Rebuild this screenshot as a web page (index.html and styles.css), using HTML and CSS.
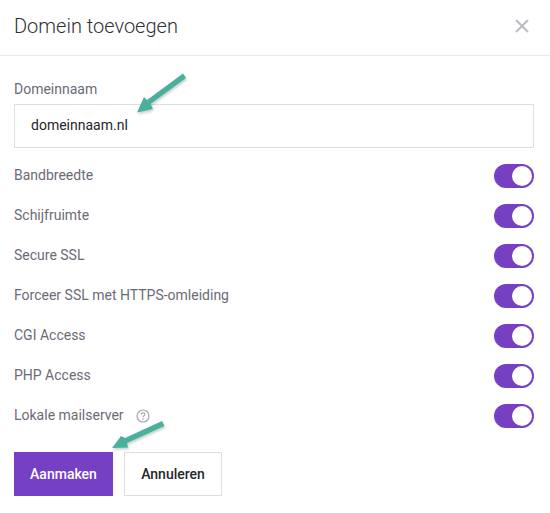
FILE: index.html
```html
<!DOCTYPE html>
<html lang="nl">
<head>
<meta charset="utf-8">
<title>Domein toevoegen</title>
<link rel="stylesheet" href="styles.css">
</head>
<body>
<div class="dialog">
  <header class="head">
    <h1 class="title">Domein toevoegen</h1>
    <svg class="close" width="14" height="14" viewBox="0 0 14 14"><path d="M1 1L13 13M13 1L1 13" stroke="#b9bcc6" stroke-width="2" fill="none"/></svg>
  </header>
  <main class="body">
    <label class="label">Domeinnaam</label>
    <div class="input">domeinnaam.nl</div>
    <div class="rows">
      <div class="row"><span class="row-label">Bandbreedte</span><span class="toggle"></span></div>
      <div class="row"><span class="row-label">Schijfruimte</span><span class="toggle"></span></div>
      <div class="row"><span class="row-label">Secure SSL</span><span class="toggle"></span></div>
      <div class="row"><span class="row-label">Forceer SSL met HTTPS-omleiding</span><span class="toggle"></span></div>
      <div class="row"><span class="row-label">CGI Access</span><span class="toggle"></span></div>
      <div class="row"><span class="row-label">PHP Access</span><span class="toggle"></span></div>
      <div class="row"><span class="row-label">Lokale mailserver
        <svg class="help" width="14" height="14" viewBox="0 0 14 14"><circle cx="7" cy="7" r="6" fill="none" stroke="#a3a6b1" stroke-width="1.2"/><path d="M5.1 5.5C5.2 4.4 6 3.8 7 3.8C8.1 3.8 8.9 4.5 8.9 5.4C8.9 6.6 7 6.7 7 8.2" fill="none" stroke="#a3a6b1" stroke-width="1.2"/><circle cx="7" cy="10.1" r=".8" fill="#a3a6b1"/></svg></span><span class="toggle"></span></div>
    </div>
    <div class="actions">
      <button class="btn primary">Aanmaken</button>
      <button class="btn ghost">Annuleren</button>
    </div>
  </main>
  <svg class="arrow arrow-top" width="60" height="50" viewBox="0 0 60 50"><path d="M0 39.500L7 24L10 27L46 .5L49 5L13.500 31L16 36Z" fill="#48b09b"/></svg>
  <svg class="arrow arrow-bottom" width="60" height="36" viewBox="0 0 60 36"><path d="M0 28L9 16L13 18L50 1L52.500 6L15 23L16 27.500Z" fill="#48b09b"/></svg>
</div>
</body>
</html>
```
FILE: styles.css
```css
* { box-sizing: border-box; }
html, body { margin: 0; background: #fff; }
body { font-family: Roboto, "Liberation Sans", sans-serif; }
.dialog { position: relative; width: 550px; height: 513px; overflow: hidden; }
.head {
  height: 56px;
  padding: 0 21px 0 14px;
  display: flex;
  align-items: center;
  justify-content: space-between;
  border-bottom: 1px solid #e9e9ec;
}
.title { margin: 0 0 3px; font-size: 20px; font-weight: 300; color: #2f2f36; }
.close { margin-bottom: 3px; }
.body { padding: 24px 16px 0 14px; }
.label { display: block; height: 24px; font-size: 14px; line-height: 18px; color: #6b6b76; }
.input {
  height: 44px;
  border: 1px solid #dedee0;
  padding: 0 16px 2px;
  display: flex;
  align-items: center;
  font-size: 14px;
  color: #26262c;
}
.rows { margin-top: 8px; }
.row { height: 40px; display: flex; align-items: center; justify-content: space-between; }
.row-label { font-size: 14px; color: #6b6b76; display: flex; align-items: center; gap: 12px; margin-bottom: 3px; }
.help { display: block; transform: translateY(1px); }
.toggle {
  width: 40px;
  height: 24px;
  border-radius: 12px;
  background: #7640c4;
  position: relative;
}
.toggle::after {
  content: "";
  position: absolute;
  top: 2px;
  right: 2px;
  width: 20px;
  height: 20px;
  border-radius: 50%;
  background: #fff;
}
.actions { margin-top: 16px; display: flex; gap: 11px; }
.btn { height: 44px; font: 500 14px Roboto, "Liberation Sans", sans-serif; padding: 0; cursor: pointer; }
.primary { width: 99px; background: #7640c4; border: 0; color: #fff; }
.ghost { width: 98px; background: #fff; border: 1px solid #dedee0; color: #26262c; }
.arrow { position: absolute; filter: drop-shadow(1px 2px 1px rgba(0,0,0,.18)); }
.arrow-top { left: 137px; top: 73px; }
.arrow-bottom { left: 112px; top: 420px; }
```
